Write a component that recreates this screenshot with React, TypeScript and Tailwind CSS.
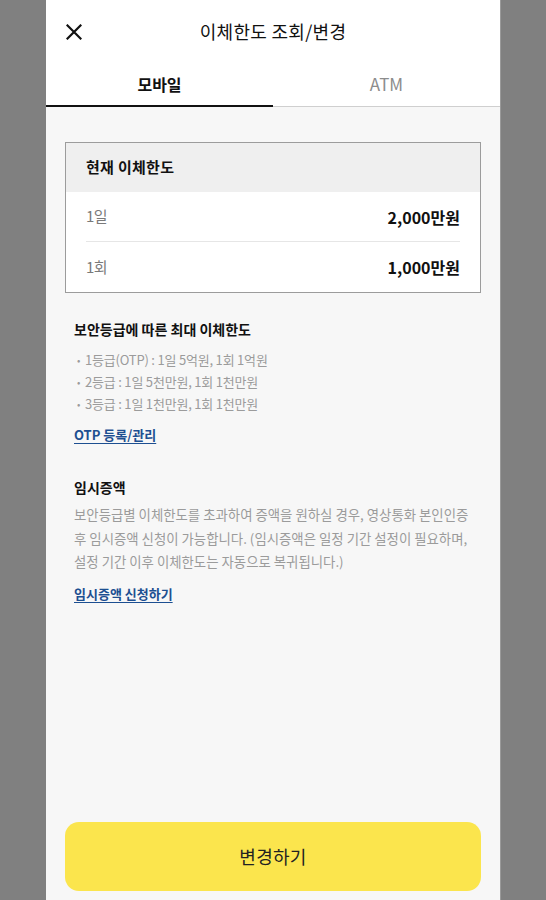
const FONT = { fontFamily: '"Noto Sans CJK KR", "Noto Sans", sans-serif' };

const limits = [
  { label: "1일", value: "2,000만원" },
  { label: "1회", value: "1,000만원" },
];

const grades = [
  "1등급(OTP) : 1일 5억원, 1회 1억원",
  "2등급 : 1일 5천만원, 1회 1천만원",
  "3등급 : 1일 1천만원, 1회 1천만원",
];

function CloseIcon() {
  return (
    <svg width="16" height="16" viewBox="0 0 16 16" fill="none">
      <path d="M1.5 1.5L14.5 14.5M14.5 1.5L1.5 14.5" stroke="#111" strokeWidth="2.2" strokeLinecap="square" />
    </svg>
  );
}

export default function App() {
  return (
    <div className="flex h-[900px] w-full bg-[#808080] pl-[46px]" style={FONT}>
      <div className="flex w-[455px] flex-col border-r border-[#9a9a9a] bg-[#f7f7f7]">
        {/* header */}
        <div className="grid h-[60px] grid-cols-[60px_1fr_60px] items-center bg-white">
          <div className="flex pl-[20px] pt-[4px]">
            <CloseIcon />
          </div>
          <div className="pt-[3px] text-center text-[18px] tracking-[0.3px] text-[#111]">이체한도 조회/변경</div>
          <div />
        </div>

        {/* tabs */}
        <div className="flex h-[47px] bg-white">
          <div className="flex flex-1 items-center justify-center border-b-2 border-[#111] pt-[2px] text-[16px] font-bold text-[#111]">
            모바일
          </div>
          <div className="flex flex-1 items-center justify-center border-b border-[#cfcfcf] pt-[2px] text-[17px] text-[#8c8c8c]">
            ATM
          </div>
        </div>

        <div className="flex flex-1 flex-col px-[19px] pt-[35px]">
          {/* current limit card */}
          <div className="border border-[#9c9c9c] bg-white">
            <div className="flex h-[49px] items-center bg-[#efefef] px-[20px] text-[15px] font-bold tracking-[0.3px] text-[#111]">
              현재 이체한도
            </div>
            <div className="px-[20px]">
              {limits.map((row, i) => (
                <div
                  key={row.label}
                  className={`flex h-[50px] items-center justify-between ${i === 0 ? "border-b border-[#e6e6e6]" : ""}`}
                >
                  <span className="text-[15px] tracking-[-0.5px] text-[#7a7a7a]">{row.label}</span>
                  <span className="text-[16px] font-bold text-[#111]">{row.value}</span>
                </div>
              ))}
            </div>
          </div>

          {/* grade info */}
          <div className="px-[9px]">
            <div className="mt-[26px] text-[14px] font-bold leading-[20px] text-[#111]">
              보안등급에 따른 최대 이체한도
            </div>
            <ul className="mt-[10px]">
              {grades.map((g) => (
                <li key={g} className="flex text-[13px] leading-[22px] tracking-[-0.2px] text-[#9b9b9b]">
                  <span className="w-[11px] pl-[3px] text-[10px]">•</span>
                  <span>{g}</span>
                </li>
              ))}
            </ul>
            <div className="mt-[10px] text-[13px] font-bold leading-[20px] text-[#1d4f91] underline underline-offset-[3px]">
              OTP 등록/관리
            </div>

            <div className="mt-[32px] text-[14px] font-bold leading-[20px] text-[#111]">
              임시증액
            </div>
            <p className="mt-[6px] text-[13.4px] leading-[23.5px] whitespace-nowrap text-[#9b9b9b]">
              보안등급별 이체한도를 초과하여 증액을 원하실 경우, 영상통화 본인인증
              <br />
              후 임시증액 신청이 가능합니다. (임시증액은 일정 기간 설정이 필요하며,
              <br />
              설정 기간 이후 이체한도는 자동으로 복귀됩니다.)
            </p>
            <div className="mt-[10px] text-[13px] font-bold leading-[20px] text-[#1d4f91] underline underline-offset-[3px]">
              임시증액 신청하기
            </div>
          </div>

          {/* bottom button */}
          <div className="mt-auto pb-[9px]">
            <button className="flex h-[69px] w-full items-center justify-center rounded-[14px] bg-[#fbe54d] text-[18px] tracking-[0.3px] text-[#222]">
              변경하기
            </button>
          </div>
        </div>
      </div>
    </div>
  );
}
